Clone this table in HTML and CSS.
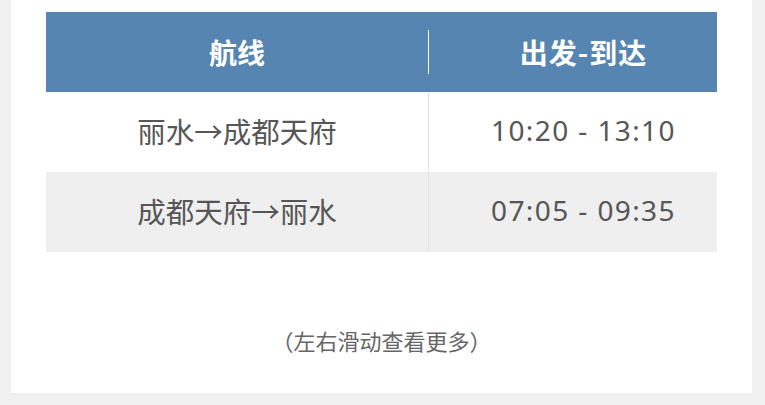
FILE: index.html
```html
<!DOCTYPE html>
<html lang="zh">
<head>
<meta charset="utf-8">
<title>航线</title>
<link rel="stylesheet" href="styles.css">
</head>
<body>
<div class="card">
  <div class="table">
    <div class="row head">
      <div class="c1">航线</div>
      <div class="sep"></div>
      <div class="c2">出发-到达</div>
    </div>
    <div class="row">
      <div class="c1 cell">丽水→成都天府</div>
      <div class="vline"></div>
      <div class="c2 cell time">10:20 - 13:10</div>
    </div>
    <div class="row alt">
      <div class="c1 cell">成都天府→丽水</div>
      <div class="vline"></div>
      <div class="c2 cell time">07:05 - 09:35</div>
    </div>
  </div>
  <p class="hint">（左右滑动查看更多）</p>
</div>
</body>
</html>
```
FILE: styles.css
```css
html, body {
  margin: 0;
  padding: 0;
  background: #f0f0f0;
}
body {
  font-family: "Noto Sans CJK SC", "Noto Sans", sans-serif;
}
.card {
  background: #ffffff;
  margin: 0 13px 0 11px;
  height: 393px;
  padding: 12px 35px 0 35px;
  box-sizing: border-box;
}
.table {
  display: flex;
  flex-direction: column;
}
.row {
  display: flex;
  align-items: center;
  height: 80px;
  color: #565656;
  font-size: 28.5px;
}
.row.alt {
  background: #efefef;
}
.head {
  background: #5585b0;
  color: #ffffff;
  font-weight: bold;
  font-size: 28px;
  padding-bottom: 1px;
  box-sizing: border-box;
}
.c1 {
  width: 382px;
  text-align: center;
}
.c2 {
  flex: 1;
  text-align: center;
  padding-left: 21px;
}
.cell {
  padding-bottom: 4px;
}
.head .c2 {
  letter-spacing: 1px;
}
.sep {
  width: 1px;
  height: 44px;
  background: #ffffff;
}
.vline {
  width: 1px;
  align-self: stretch;
  background: #e3e3e3;
}
.time {
  font-family: "Noto Sans", "Open Sans", sans-serif;
  font-size: 28px;
  letter-spacing: 1.4px;
}
.hint {
  margin: 73px 0 0 0;
  text-align: center;
  font-size: 22px;
  line-height: 30px;
  color: #666666;
}
```
